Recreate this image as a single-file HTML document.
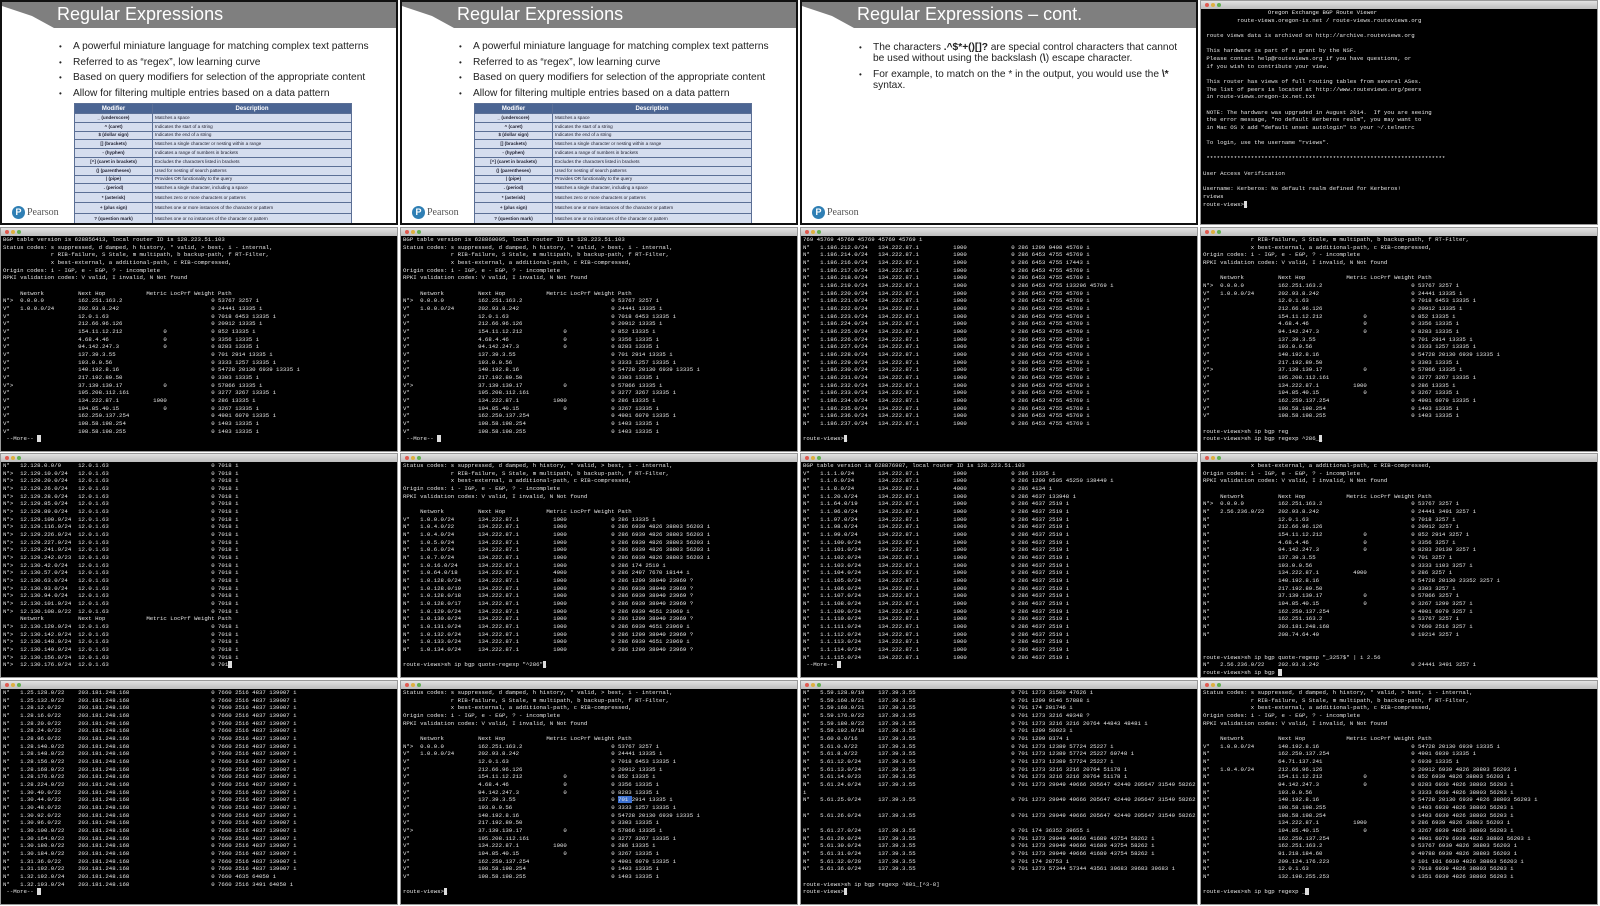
<!DOCTYPE html>
<html><head><meta charset="utf-8"><style>
*{margin:0;padding:0;box-sizing:border-box}
body{width:1600px;height:906px;background:#fff;position:relative;overflow:hidden;font-family:"Liberation Sans",sans-serif}
.cell{position:absolute;width:398px;height:225px;overflow:hidden}
.slide{background:#fff;border:2px solid #111}
.tb{position:absolute;left:0;top:0;right:0;height:26px;background:#7f7f7f;clip-path:polygon(0 0,100% 0,100% 100%,52px 100%,30px 14px,0 4px)}
.tt{position:absolute;left:55px;top:2px;color:#fff;font-size:18px}
ul{position:absolute;left:57px;list-style:none;font-size:10.2px;color:#222}
ul li{position:relative;padding-left:14px;margin-bottom:4.6px;line-height:11px}
ul li:before{content:"•";position:absolute;left:0;font-size:8px}
table{position:absolute;left:72px;top:101px;width:278px;border-collapse:collapse;font-size:4.6px;color:#223}
td,th{border:1px solid #5b6f95;padding:0 2px;height:8.8px;line-height:6px}
th{background:#4b6593;color:#fff;font-size:6px;height:10px}
td{background:#d5ddee}
td:first-child{text-align:center;font-weight:bold;width:78px}
.logo{position:absolute;left:10px;top:204px;display:flex;align-items:center;gap:2px}
.logo b{width:13px;height:13px;border-radius:50%;background:#2f7fb4;color:#fff;font-size:9px;text-align:center;line-height:13px}
.logo span{font-family:"Liberation Serif",serif;font-size:10px;color:#555}
.term{background:#000;border:1px solid #999}
.bar{height:8px;background:linear-gradient(#e2e2e2,#bdbdbd);position:relative}
.bar i{position:absolute;top:2px;width:4px;height:4px;border-radius:50%}
pre{font-family:"Liberation Mono",monospace;font-size:5.7px;line-height:7.67px;color:#e4e4e4;padding:0 0 0 2px;white-space:pre}
.cur{background:#ddd;color:#ddd}
</style></head><body>

<!-- Row 0 -->
<div class="cell slide" style="left:0;top:0">
<div class="tb"></div><div class="tt">Regular Expressions</div>
<ul style="top:39px"><li>A powerful miniature language for matching complex text patterns</li><li>Referred to as “regex”, low learning curve</li><li>Based on query modifiers for selection of the appropriate content</li><li>Allow for filtering multiple entries based on a data pattern</li></ul>
<table><tr><th>Modifier</th><th>Description</th></tr>
<tr><td>_ (underscore)</td><td>Matches a space</td></tr>
<tr><td>^ (caret)</td><td>Indicates the start of a string</td></tr>
<tr><td>$ (dollar sign)</td><td>Indicates the end of a string</td></tr>
<tr><td>[] (brackets)</td><td>Matches a single character or nesting within a range</td></tr>
<tr><td>- (hyphen)</td><td>Indicates a range of numbers in brackets</td></tr>
<tr><td>[^] (caret in brackets)</td><td>Excludes the characters listed in brackets</td></tr>
<tr><td>() (parentheses)</td><td>Used for nesting of search patterns</td></tr>
<tr><td>| (pipe)</td><td>Provides OR functionality to the query</td></tr>
<tr><td>. (period)</td><td>Matches a single character, including a space</td></tr>
<tr><td style="height:10px">* (asterisk)</td><td>Matches zero or more characters or patterns</td></tr>
<tr><td style="height:10.5px">+ (plus sign)</td><td>Matches one or more instances of the character or pattern</td></tr>
<tr><td style="height:11.5px">? (question mark)</td><td>Matches one or no instances of the character or pattern</td></tr></table>
<div class="logo"><b>P</b><span>Pearson</span></div>
</div>

<div class="cell slide" style="left:400px;top:0">
<div class="tb"></div><div class="tt">Regular Expressions</div>
<ul style="top:39px"><li>A powerful miniature language for matching complex text patterns</li><li>Referred to as “regex”, low learning curve</li><li>Based on query modifiers for selection of the appropriate content</li><li>Allow for filtering multiple entries based on a data pattern</li></ul>
<table><tr><th>Modifier</th><th>Description</th></tr>
<tr><td>_ (underscore)</td><td>Matches a space</td></tr>
<tr><td>^ (caret)</td><td>Indicates the start of a string</td></tr>
<tr><td>$ (dollar sign)</td><td>Indicates the end of a string</td></tr>
<tr><td>[] (brackets)</td><td>Matches a single character or nesting within a range</td></tr>
<tr><td>- (hyphen)</td><td>Indicates a range of numbers in brackets</td></tr>
<tr><td>[^] (caret in brackets)</td><td>Excludes the characters listed in brackets</td></tr>
<tr><td>() (parentheses)</td><td>Used for nesting of search patterns</td></tr>
<tr><td>| (pipe)</td><td>Provides OR functionality to the query</td></tr>
<tr><td>. (period)</td><td>Matches a single character, including a space</td></tr>
<tr><td style="height:10px">* (asterisk)</td><td>Matches zero or more characters or patterns</td></tr>
<tr><td style="height:10.5px">+ (plus sign)</td><td>Matches one or more instances of the character or pattern</td></tr>
<tr><td style="height:11.5px">? (question mark)</td><td>Matches one or no instances of the character or pattern</td></tr></table>
<div class="logo"><b>P</b><span>Pearson</span></div>
</div>

<div class="cell slide" style="left:800px;top:0">
<div class="tb"></div><div class="tt">Regular Expressions – cont.</div>
<ul style="top:40px;width:330px"><li>The characters <b>.^$*+()[]?</b> are special control characters that cannot be used without using the backslash (<b>\</b>) escape character.</li><li>For example, to match on the * in the output, you would use the <b>\*</b> syntax.</li></ul>
<div class="logo"><b>P</b><span>Pearson</span></div>
</div>

<div class="cell term" style="left:1200px;top:0">
<div class="bar"><i style="left:4px;background:#e05a50"></i><i style="left:10px;background:#e0b040"></i><i style="left:16px;background:#60b050"></i></div>
<pre>
                   Oregon Exchange BGP Route Viewer
          route-views.oregon-ix.net / route-views.routeviews.org

 route views data is archived on http://archive.routeviews.org

 This hardware is part of a grant by the NSF.
 Please contact help@routeviews.org if you have questions, or
 if you wish to contribute your view.

 This router has views of full routing tables from several ASes.
 The list of peers is located at http://www.routeviews.org/peers
 in route-views.oregon-ix.net.txt

 NOTE: The hardware was upgraded in August 2014.  If you are seeing
 the error message, "no default Kerberos realm", you may want to
 in Mac OS X add "default unset autologin" to your ~/.telnetrc

 To login, use the username "rviews".

 **********************************************************************

User Access Verification

Username: Kerberos: No default realm defined for Kerberos!
rviews
route-views><span class="cur">_</span></pre></div>

<!-- Row 1 -->
<div class="cell term" style="left:0;top:227px">
<div class="bar"><i style="left:4px;background:#e05a50"></i><i style="left:10px;background:#e0b040"></i><i style="left:16px;background:#60b050"></i></div>
<pre>BGP table version is 628856413, local router ID is 128.223.51.103
Status codes: s suppressed, d damped, h history, * valid, > best, i - internal,
              r RIB-failure, S Stale, m multipath, b backup-path, f RT-Filter,
              x best-external, a additional-path, c RIB-compressed,
Origin codes: i - IGP, e - EGP, ? - incomplete
RPKI validation codes: V valid, I invalid, N Not found

     Network          Next Hop            Metric LocPrf Weight Path
N*>  0.0.0.0          162.251.163.2                          0 53767 3257 i
V*   1.0.0.0/24       202.93.8.242                           0 24441 13335 i
V*                    12.0.1.63                              0 7018 6453 13335 i
V*                    212.66.96.126                          0 20912 13335 i
V*                    154.11.12.212            0             0 852 13335 i
V*                    4.68.4.46                0             0 3356 13335 i
V*                    94.142.247.3             0             0 8283 13335 i
V*                    137.39.3.55                            0 701 2914 13335 i
V*                    193.0.0.56                             0 3333 1257 13335 i
V*                    140.192.8.16                           0 54728 20130 6939 13335 i
V*                    217.192.89.50                          0 3303 13335 i
V*>                   37.139.139.17            0             0 57866 13335 i
V*                    195.208.112.161                        0 3277 3267 13335 i
V*                    134.222.87.1          1000             0 286 13335 i
V*                    194.85.40.15             0             0 3267 13335 i
V*                    162.250.137.254                        0 4901 6079 13335 i
V*                    198.58.198.254                         0 1403 13335 i
V*                    198.58.198.255                         0 1403 13335 i
 --More-- <span class="cur">_</span></pre></div>

<div class="cell term" style="left:400px;top:227px">
<div class="bar"><i style="left:4px;background:#e05a50"></i><i style="left:10px;background:#e0b040"></i><i style="left:16px;background:#60b050"></i></div>
<pre>BGP table version is 628860005, local router ID is 128.223.51.103
Status codes: s suppressed, d damped, h history, * valid, > best, i - internal,
              r RIB-failure, S Stale, m multipath, b backup-path, f RT-Filter,
              x best-external, a additional-path, c RIB-compressed,
Origin codes: i - IGP, e - EGP, ? - incomplete
RPKI validation codes: V valid, I invalid, N Not found

     Network          Next Hop            Metric LocPrf Weight Path
N*>  0.0.0.0          162.251.163.2                          0 53767 3257 i
V*   1.0.0.0/24       202.93.8.242                           0 24441 13335 i
V*                    12.0.1.63                              0 7018 6453 13335 i
V*                    212.66.96.126                          0 20912 13335 i
V*                    154.11.12.212            0             0 852 13335 i
V*                    4.68.4.46                0             0 3356 13335 i
V*                    94.142.247.3             0             0 8283 13335 i
V*                    137.39.3.55                            0 701 2914 13335 i
V*                    193.0.0.56                             0 3333 1257 13335 i
V*                    140.192.8.16                           0 54728 20130 6939 13335 i
V*                    217.192.89.50                          0 3303 13335 i
V*>                   37.139.139.17            0             0 57866 13335 i
V*                    195.208.112.161                        0 3277 3267 13335 i
V*                    134.222.87.1          1000             0 286 13335 i
V*                    194.85.40.15             0             0 3267 13335 i
V*                    162.250.137.254                        0 4901 6079 13335 i
V*                    198.58.198.254                         0 1403 13335 i
V*                    198.58.198.255                         0 1403 13335 i
 --More-- <span class="cur">_</span></pre></div>

<div class="cell term" style="left:800px;top:227px">
<div class="bar"><i style="left:4px;background:#e05a50"></i><i style="left:10px;background:#e0b040"></i><i style="left:16px;background:#60b050"></i></div>
<pre>769 45769 45769 45769 45769 45769 i
N*   1.186.212.0/24   134.222.87.1          1000             0 286 1299 9498 45769 i
N*   1.186.214.0/24   134.222.87.1          1000             0 286 6453 4755 45769 i
N*   1.186.216.0/24   134.222.87.1          1000             0 286 6453 4755 17443 i
N*   1.186.217.0/24   134.222.87.1          1000             0 286 6453 4755 45769 i
N*   1.186.218.0/24   134.222.87.1          1000             0 286 6453 4755 45769 i
N*   1.186.219.0/24   134.222.87.1          1000             0 286 6453 4755 133296 45769 i
N*   1.186.220.0/24   134.222.87.1          1000             0 286 6453 4755 45769 i
N*   1.186.221.0/24   134.222.87.1          1000             0 286 6453 4755 45769 i
N*   1.186.222.0/24   134.222.87.1          1000             0 286 6453 4755 45769 i
N*   1.186.223.0/24   134.222.87.1          1000             0 286 6453 4755 45769 i
N*   1.186.224.0/24   134.222.87.1          1000             0 286 6453 4755 45769 i
N*   1.186.225.0/24   134.222.87.1          1000             0 286 6453 4755 45769 i
N*   1.186.226.0/24   134.222.87.1          1000             0 286 6453 4755 45769 i
N*   1.186.227.0/24   134.222.87.1          1000             0 286 6453 4755 45769 i
N*   1.186.228.0/24   134.222.87.1          1000             0 286 6453 4755 45769 i
N*   1.186.229.0/24   134.222.87.1          1000             0 286 6453 4755 45769 i
N*   1.186.230.0/24   134.222.87.1          1000             0 286 6453 4755 45769 i
N*   1.186.231.0/24   134.222.87.1          1000             0 286 6453 4755 45769 i
N*   1.186.232.0/24   134.222.87.1          1000             0 286 6453 4755 45769 i
N*   1.186.233.0/24   134.222.87.1          1000             0 286 6453 4755 45769 i
N*   1.186.234.0/24   134.222.87.1          1000             0 286 6453 4755 45769 i
N*   1.186.235.0/24   134.222.87.1          1000             0 286 6453 4755 45769 i
N*   1.186.236.0/24   134.222.87.1          1000             0 286 6453 4755 45769 i
N*   1.186.237.0/24   134.222.87.1          1000             0 286 6453 4755 45769 i

route-views><span class="cur">_</span></pre></div>

<div class="cell term" style="left:1200px;top:227px">
<div class="bar"><i style="left:4px;background:#e05a50"></i><i style="left:10px;background:#e0b040"></i><i style="left:16px;background:#60b050"></i></div>
<pre>              r RIB-failure, S Stale, m multipath, b backup-path, f RT-Filter,
              x best-external, a additional-path, c RIB-compressed,
Origin codes: i - IGP, e - EGP, ? - incomplete
RPKI validation codes: V valid, I invalid, N Not found

     Network          Next Hop            Metric LocPrf Weight Path
N*>  0.0.0.0          162.251.163.2                          0 53767 3257 i
V*   1.0.0.0/24       202.93.8.242                           0 24441 13335 i
V*                    12.0.1.63                              0 7018 6453 13335 i
V*                    212.66.96.126                          0 20912 13335 i
V*                    154.11.12.212            0             0 852 13335 i
V*                    4.68.4.46                0             0 3356 13335 i
V*                    94.142.247.3             0             0 8283 13335 i
V*                    137.39.3.55                            0 701 2914 13335 i
V*                    193.0.0.56                             0 3333 1257 13335 i
V*                    140.192.8.16                           0 54728 20130 6939 13335 i
V*                    217.192.89.50                          0 3303 13335 i
V*>                   37.139.139.17            0             0 57866 13335 i
V*                    195.208.112.161                        0 3277 3267 13335 i
V*                    134.222.87.1          1000             0 286 13335 i
V*                    194.85.40.15             0             0 3267 13335 i
V*                    162.250.137.254                        0 4901 6079 13335 i
V*                    198.58.198.254                         0 1403 13335 i
V*                    198.58.198.255                         0 1403 13335 i

route-views>sh ip bgp reg
route-views>sh ip bgp regexp ^286_<span class="cur">_</span></pre></div>

<!-- Row 2 -->
<div class="cell term" style="left:0;top:453px">
<div class="bar"><i style="left:4px;background:#e05a50"></i><i style="left:10px;background:#e0b040"></i><i style="left:16px;background:#60b050"></i></div>
<pre>N*   12.128.0.0/9     12.0.1.63                              0 7018 i
N*>  12.129.10.0/24   12.0.1.63                              0 7018 i
N*>  12.129.20.0/24   12.0.1.63                              0 7018 i
N*>  12.129.26.0/24   12.0.1.63                              0 7018 i
N*>  12.129.28.0/24   12.0.1.63                              0 7018 i
N*>  12.129.85.0/24   12.0.1.63                              0 7018 i
N*>  12.129.89.0/24   12.0.1.63                              0 7018 i
N*>  12.129.100.0/24  12.0.1.63                              0 7018 i
N*>  12.129.116.0/24  12.0.1.63                              0 7018 i
N*>  12.129.226.0/24  12.0.1.63                              0 7018 i
N*>  12.129.227.0/24  12.0.1.63                              0 7018 i
N*>  12.129.241.0/24  12.0.1.63                              0 7018 i
N*>  12.129.242.0/23  12.0.1.63                              0 7018 i
N*>  12.130.42.0/24   12.0.1.63                              0 7018 i
N*>  12.130.57.0/24   12.0.1.63                              0 7018 i
N*>  12.130.63.0/24   12.0.1.63                              0 7018 i
N*>  12.130.93.0/24   12.0.1.63                              0 7018 i
N*>  12.130.94.0/24   12.0.1.63                              0 7018 i
N*>  12.130.101.0/24  12.0.1.63                              0 7018 i
N*>  12.130.108.0/22  12.0.1.63                              0 7018 i
     Network          Next Hop            Metric LocPrf Weight Path
N*>  12.130.120.0/24  12.0.1.63                              0 7018 i
N*>  12.130.142.0/24  12.0.1.63                              0 7018 i
N*>  12.130.148.0/24  12.0.1.63                              0 7018 i
N*>  12.130.149.0/24  12.0.1.63                              0 7018 i
N*>  12.130.156.0/24  12.0.1.63                              0 7018 i
N*>  12.130.176.0/24  12.0.1.63                              0 701<span class="cur">_</span></pre></div>

<div class="cell term" style="left:400px;top:453px">
<div class="bar"><i style="left:4px;background:#e05a50"></i><i style="left:10px;background:#e0b040"></i><i style="left:16px;background:#60b050"></i></div>
<pre>Status codes: s suppressed, d damped, h history, * valid, > best, i - internal,
              r RIB-failure, S Stale, m multipath, b backup-path, f RT-Filter,
              x best-external, a additional-path, c RIB-compressed,
Origin codes: i - IGP, e - EGP, ? - incomplete
RPKI validation codes: V valid, I invalid, N Not found

     Network          Next Hop            Metric LocPrf Weight Path
V*   1.0.0.0/24       134.222.87.1          1000             0 286 13335 i
N*   1.0.4.0/22       134.222.87.1          1000             0 286 6939 4826 38803 56203 i
N*   1.0.4.0/24       134.222.87.1          1000             0 286 6939 4826 38803 56203 i
N*   1.0.5.0/24       134.222.87.1          1000             0 286 6939 4826 38803 56203 i
N*   1.0.6.0/24       134.222.87.1          1000             0 286 6939 4826 38803 56203 i
N*   1.0.7.0/24       134.222.87.1          1000             0 286 6939 4826 38803 56203 i
N*   1.0.16.0/24      134.222.87.1          1000             0 286 174 2519 i
N*   1.0.64.0/18      134.222.87.1          4000             0 286 2497 7670 18144 i
N*   1.0.128.0/24     134.222.87.1          1000             0 286 1299 38040 23969 ?
N*   1.0.128.0/19     134.222.87.1          1000             0 286 6939 38040 23969 ?
N*   1.0.128.0/18     134.222.87.1          1000             0 286 6939 38040 23969 ?
N*   1.0.128.0/17     134.222.87.1          1000             0 286 6939 38040 23969 ?
N*   1.0.129.0/24     134.222.87.1          1000             0 286 6939 4651 23969 i
N*   1.0.130.0/24     134.222.87.1          1000             0 286 1299 38040 23969 ?
N*   1.0.131.0/24     134.222.87.1          1000             0 286 6939 4651 23969 i
N*   1.0.132.0/24     134.222.87.1          1000             0 286 1299 38040 23969 ?
N*   1.0.133.0/24     134.222.87.1          1000             0 286 6939 4651 23969 i
N*   1.0.134.0/24     134.222.87.1          1000             0 286 1299 38040 23969 ?

route-views>sh ip bgp quote-regexp "^286"<span class="cur">_</span></pre></div>

<div class="cell term" style="left:800px;top:453px">
<div class="bar"><i style="left:4px;background:#e05a50"></i><i style="left:10px;background:#e0b040"></i><i style="left:16px;background:#60b050"></i></div>
<pre>BGP table version is 628876987, local router ID is 128.223.51.103
V*   1.1.1.0/24       134.222.87.1          1000             0 286 13335 i
N*   1.1.6.0/24       134.222.87.1          1000             0 286 1299 9505 45250 138449 i
N*   1.1.8.0/24       134.222.87.1          4000             0 286 4134 i
N*   1.1.20.0/24      134.222.87.1          1000             0 286 4637 133948 i
N*   1.1.64.0/19      134.222.87.1          1000             0 286 4637 2519 i
N*   1.1.96.0/24      134.222.87.1          1000             0 286 4637 2519 i
N*   1.1.97.0/24      134.222.87.1          1000             0 286 4637 2519 i
N*   1.1.98.0/24      134.222.87.1          1000             0 286 4637 2519 i
N*   1.1.99.0/24      134.222.87.1          1000             0 286 4637 2519 i
N*   1.1.100.0/24     134.222.87.1          1000             0 286 4637 2519 i
N*   1.1.101.0/24     134.222.87.1          1000             0 286 4637 2519 i
N*   1.1.102.0/24     134.222.87.1          1000             0 286 4637 2519 i
N*   1.1.103.0/24     134.222.87.1          1000             0 286 4637 2519 i
N*   1.1.104.0/24     134.222.87.1          1000             0 286 4637 2519 i
N*   1.1.105.0/24     134.222.87.1          1000             0 286 4637 2519 i
N*   1.1.106.0/24     134.222.87.1          1000             0 286 4637 2519 i
N*   1.1.107.0/24     134.222.87.1          1000             0 286 4637 2519 i
N*   1.1.108.0/24     134.222.87.1          1000             0 286 4637 2519 i
N*   1.1.109.0/24     134.222.87.1          1000             0 286 4637 2519 i
N*   1.1.110.0/24     134.222.87.1          1000             0 286 4637 2519 i
N*   1.1.111.0/24     134.222.87.1          1000             0 286 4637 2519 i
N*   1.1.112.0/24     134.222.87.1          1000             0 286 4637 2519 i
N*   1.1.113.0/24     134.222.87.1          1000             0 286 4637 2519 i
N*   1.1.114.0/24     134.222.87.1          1000             0 286 4637 2519 i
N*   1.1.115.0/24     134.222.87.1          1000             0 286 4637 2519 i
 --More-- <span class="cur">_</span></pre></div>

<div class="cell term" style="left:1200px;top:453px">
<div class="bar"><i style="left:4px;background:#e05a50"></i><i style="left:10px;background:#e0b040"></i><i style="left:16px;background:#60b050"></i></div>
<pre>              x best-external, a additional-path, c RIB-compressed,
Origin codes: i - IGP, e - EGP, ? - incomplete
RPKI validation codes: V valid, I invalid, N Not found

     Network          Next Hop            Metric LocPrf Weight Path
N*>  0.0.0.0          162.251.163.2                          0 53767 3257 i
N*   2.56.236.0/22    202.93.8.242                           0 24441 3491 3257 i
N*                    12.0.1.63                              0 7018 3257 i
N*                    212.66.96.126                          0 20912 3257 i
N*                    154.11.12.212            0             0 852 2914 3257 i
N*                    4.68.4.46                0             0 3356 3257 i
N*                    94.142.247.3             0             0 8283 20130 3257 i
N*                    137.39.3.55                            0 701 3257 i
N*                    193.0.0.56                             0 3333 1103 3257 i
N*                    134.222.87.1          4000             0 286 3257 i
N*                    140.192.8.16                           0 54728 20130 23352 3257 i
N*                    217.192.89.50                          0 3303 3257 i
N*                    37.139.139.17            0             0 57866 3257 i
N*                    194.85.40.15             0             0 3267 1299 3257 i
N*                    162.250.137.254                        0 4901 6079 3257 i
N*                    162.251.163.2                          0 53767 3257 i
N*                    203.181.248.168                        0 7660 2516 3257 i
N*                    208.74.64.40                           0 19214 3257 i


route-views>sh ip bgp quote-regexp "_3257$" | i 2.56
N*   2.56.236.0/22    202.93.8.242                           0 24441 3491 3257 i
route-views>sh ip bgp <span class="cur">_</span></pre></div>

<!-- Row 3 -->
<div class="cell term" style="left:0;top:680px">
<div class="bar"><i style="left:4px;background:#e05a50"></i><i style="left:10px;background:#e0b040"></i><i style="left:16px;background:#60b050"></i></div>
<pre>N*   1.25.128.0/22    203.181.248.168                        0 7660 2516 4837 139007 i
N*   1.25.132.0/22    203.181.248.168                        0 7660 2516 4837 139007 i
N*   1.28.12.0/22     203.181.248.168                        0 7660 2516 4837 139007 i
N*   1.28.16.0/22     203.181.248.168                        0 7660 2516 4837 139007 i
N*   1.28.20.0/22     203.181.248.168                        0 7660 2516 4837 139007 i
N*   1.28.24.0/22     203.181.248.168                        0 7660 2516 4837 139007 i
N*   1.28.96.0/22     203.181.248.168                        0 7660 2516 4837 139007 i
N*   1.28.140.0/22    203.181.248.168                        0 7660 2516 4837 139007 i
N*   1.28.148.0/22    203.181.248.168                        0 7660 2516 4837 139007 i
N*   1.28.156.0/22    203.181.248.168                        0 7660 2516 4837 139007 i
N*   1.28.168.0/22    203.181.248.168                        0 7660 2516 4837 139007 i
N*   1.28.176.0/22    203.181.248.168                        0 7660 2516 4837 139007 i
N*   1.28.224.0/22    203.181.248.168                        0 7660 2516 4837 139007 i
N*   1.30.40.0/22     203.181.248.168                        0 7660 2516 4837 139007 i
N*   1.30.44.0/22     203.181.248.168                        0 7660 2516 4837 139007 i
N*   1.30.48.0/22     203.181.248.168                        0 7660 2516 4837 139007 i
N*   1.30.92.0/22     203.181.248.168                        0 7660 2516 4837 139007 i
N*   1.30.96.0/22     203.181.248.168                        0 7660 2516 4837 139007 i
N*   1.30.100.0/22    203.181.248.168                        0 7660 2516 4837 139007 i
N*   1.30.164.0/22    203.181.248.168                        0 7660 2516 4837 139007 i
N*   1.30.180.0/22    203.181.248.168                        0 7660 2516 4837 139007 i
N*   1.30.184.0/22    203.181.248.168                        0 7660 2516 4837 139007 i
N*   1.31.36.0/22     203.181.248.168                        0 7660 2516 4837 139007 i
N*   1.31.192.0/22    203.181.248.168                        0 7660 2516 4837 139007 i
N*   1.32.192.0/24    203.181.248.168                        0 7660 4635 64050 i
N*   1.32.193.0/24    203.181.248.168                        0 7660 2516 3491 64050 i
 --More-- <span class="cur">_</span></pre></div>

<div class="cell term" style="left:400px;top:680px">
<div class="bar"><i style="left:4px;background:#e05a50"></i><i style="left:10px;background:#e0b040"></i><i style="left:16px;background:#60b050"></i></div>
<pre>Status codes: s suppressed, d damped, h history, * valid, > best, i - internal,
              r RIB-failure, S Stale, m multipath, b backup-path, f RT-Filter,
              x best-external, a additional-path, c RIB-compressed,
Origin codes: i - IGP, e - EGP, ? - incomplete
RPKI validation codes: V valid, I invalid, N Not found

     Network          Next Hop            Metric LocPrf Weight Path
N*>  0.0.0.0          162.251.163.2                          0 53767 3257 i
V*   1.0.0.0/24       202.93.8.242                           0 24441 13335 i
V*                    12.0.1.63                              0 7018 6453 13335 i
V*                    212.66.96.126                          0 20912 13335 i
V*                    154.11.12.212            0             0 852 13335 i
V*                    4.68.4.46                0             0 3356 13335 i
V*                    94.142.247.3             0             0 8283 13335 i
V*                    137.39.3.55                            0 <span style="background:#3a6fd0">701 </span>2914 13335 i
V*                    193.0.0.56                             0 3333 1257 13335 i
V*                    140.192.8.16                           0 54728 20130 6939 13335 i
V*                    217.192.89.50                          0 3303 13335 i
V*>                   37.139.139.17            0             0 57866 13335 i
V*                    195.208.112.161                        0 3277 3267 13335 i
V*                    134.222.87.1          1000             0 286 13335 i
V*                    194.85.40.15             0             0 3267 13335 i
V*                    162.250.137.254                        0 4901 6079 13335 i
V*                    198.58.198.254                         0 1403 13335 i
V*                    198.58.198.255                         0 1403 13335 i

route-views><span class="cur">_</span></pre></div>

<div class="cell term" style="left:800px;top:680px">
<div class="bar"><i style="left:4px;background:#e05a50"></i><i style="left:10px;background:#e0b040"></i><i style="left:16px;background:#60b050"></i></div>
<pre>N*   5.59.128.0/19    137.39.3.55                            0 701 1273 31500 47626 i
N*   5.59.160.0/21    137.39.3.55                            0 701 1299 9146 57888 i
N*   5.59.168.0/21    137.39.3.55                            0 701 174 201746 i
N*   5.59.176.0/22    137.39.3.55                            0 701 1273 3216 49348 ?
N*   5.59.180.0/22    137.39.3.55                            0 701 1273 3216 3216 20764 44843 48481 i
N*   5.59.192.0/18    137.39.3.55                            0 701 1299 50923 i
N*   5.60.0.0/16      137.39.3.55                            0 701 1299 8374 i
N*   5.61.0.0/22      137.39.3.55                            0 701 1273 12389 57724 25227 i
N*   5.61.8.0/22      137.39.3.55                            0 701 1273 12389 57724 25227 60748 i
N*   5.61.12.0/24     137.39.3.55                            0 701 1273 12389 57724 25227 i
N*   5.61.13.0/24     137.39.3.55                            0 701 1273 3216 3216 20764 51178 i
N*   5.61.14.0/23     137.39.3.55                            0 701 1273 3216 3216 20764 51178 i
N*   5.61.24.0/24     137.39.3.55                            0 701 1273 29049 49666 205647 42440 205647 31549 58262
i
N*   5.61.25.0/24     137.39.3.55                            0 701 1273 29049 49666 205647 42440 205647 31549 58262

N*   5.61.26.0/24     137.39.3.55                            0 701 1273 29049 49666 205647 42440 205647 31549 58262

N*   5.61.27.0/24     137.39.3.55                            0 701 174 36352 39655 i
N*   5.61.29.0/24     137.39.3.55                            0 701 1273 29049 49666 41689 43754 58262 i
N*   5.61.30.0/24     137.39.3.55                            0 701 1273 29049 49666 41689 43754 58262 i
N*   5.61.31.0/24     137.39.3.55                            0 701 1273 29049 49666 41689 43754 58262 i
N*   5.61.32.0/20     137.39.3.55                            0 701 174 28753 i
N*   5.61.36.0/24     137.39.3.55                            0 701 1273 57344 57344 43561 39683 39683 39683 i

route-views>sh ip bgp regexp ^801_[^3-8]
route-views><span class="cur">_</span></pre></div>

<div class="cell term" style="left:1200px;top:680px">
<div class="bar"><i style="left:4px;background:#e05a50"></i><i style="left:10px;background:#e0b040"></i><i style="left:16px;background:#60b050"></i></div>
<pre>Status codes: s suppressed, d damped, h history, * valid, > best, i - internal,
              r RIB-failure, S Stale, m multipath, b backup-path, f RT-Filter,
              x best-external, a additional-path, c RIB-compressed,
Origin codes: i - IGP, e - EGP, ? - incomplete
RPKI validation codes: V valid, I invalid, N Not found

     Network          Next Hop            Metric LocPrf Weight Path
V*   1.0.0.0/24       140.192.8.16                           0 54728 20130 6939 13335 i
N*                    162.250.137.254                        0 4901 6939 13335 i
N*                    64.71.137.241                          0 6939 13335 i
N*   1.0.4.0/24       212.66.96.126                          0 20912 6939 4826 38803 56203 i
N*                    154.11.12.212            0             0 852 6939 4826 38803 56203 i
N*                    94.142.247.3             0             0 8283 6939 4826 38803 56203 i
N*                    193.0.0.56                             0 3333 6939 4826 38803 56203 i
N*                    140.192.8.16                           0 54728 20130 6939 4826 38803 56203 i
N*                    198.58.198.255                         0 1403 6939 4826 38803 56203 i
N*                    198.58.198.254                         0 1403 6939 4826 38803 56203 i
N*                    134.222.87.1          1000             0 286 6939 4826 38803 56203 i
N*                    194.85.40.15             0             0 3267 6939 4826 38803 56203 i
N*                    162.250.137.254                        0 4901 6079 6939 4826 38803 56203 i
N*                    162.251.163.2                          0 53767 6939 4826 38803 56203 i
N*                    91.218.184.60                          0 49788 6939 4826 38803 56203 i
N*                    209.124.176.223                        0 101 101 6939 4826 38803 56203 i
N*                    12.0.1.63                              0 7018 6939 4826 38803 56203 i
N*                    132.198.255.253                        0 1351 6939 4826 38803 56203 i

route-views>sh ip bgp regexp _<span class="cur">_</span></pre></div>

</body></html>
